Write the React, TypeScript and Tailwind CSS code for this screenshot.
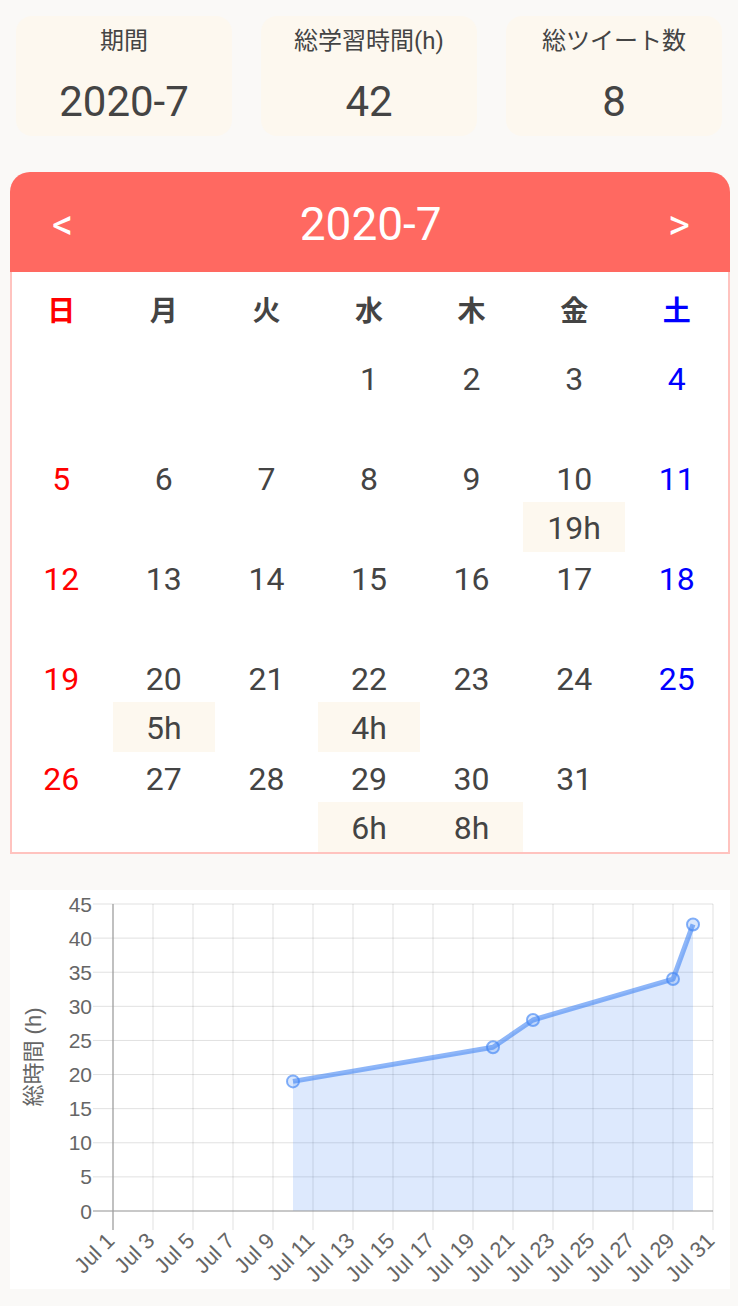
import React from "react";

const font = { fontFamily: "Roboto, 'Noto Sans CJK JP', sans-serif" };

const stats = [
  { label: "期間", value: "2020-7" },
  { label: "総学習時間(h)", value: "42" },
  { label: "総ツイート数", value: "8" },
];

const weekdays = ["日", "月", "火", "水", "木", "金", "土"];

const hours: Record<number, string> = { 10: "19h", 20: "5h", 22: "4h", 29: "6h", 30: "8h" };

// July 2020 starts on Wednesday
const cells: (number | null)[] = [null, null, null];
for (let d = 1; d <= 31; d++) cells.push(d);
while (cells.length < 35) cells.push(null);

function dayColor(i: number) {
  if (i % 7 === 0) return "text-[#ff0000]";
  if (i % 7 === 6) return "text-[#0000ff]";
  return "text-[#444444]";
}

// chart geometry (local to chart card)
const X0 = 103;
const DX = 20;
const Y0 = 321;
const YTOP = 14;
const PER = (Y0 - YTOP) / 45;
const px = (day: number) => X0 + (day - 1) * DX;
const py = (v: number) => Y0 - v * PER;

const data: [number, number][] = [
  [10, 19],
  [20, 24],
  [22, 28],
  [29, 34],
  [30, 42],
];

const axisFont = "'Liberation Sans', Arial, sans-serif";

function Chart() {
  const line = data.map(([d, v]) => `${px(d)},${py(v)}`).join(" ");
  const area = `${px(10)},${Y0} ${line} ${px(30)},${Y0}`;
  const days = Array.from({ length: 16 }, (_, i) => 1 + i * 2);
  const vals = Array.from({ length: 10 }, (_, i) => i * 5);
  return (
    <svg width="720" height="399" className="block overflow-visible">
      {vals.map((v) => (
        <line key={v} x1={83} x2={703} y1={py(v)} y2={py(v)} stroke="rgba(0,0,0,0.12)" strokeWidth={1} />
      ))}
      {days.map((d) => (
        <line key={d} x1={px(d)} x2={px(d)} y1={YTOP} y2={Y0 + 19} stroke="rgba(0,0,0,0.12)" strokeWidth={1} />
      ))}
      <polygon points={area} fill="rgba(66,133,244,0.18)" />
      <line x1={X0} x2={X0} y1={YTOP} y2={Y0 + 19} stroke="#a0a0a0" strokeWidth={1.2} />
      <line x1={83} x2={703} y1={Y0} y2={Y0} stroke="#a0a0a0" strokeWidth={1.2} />
      <polyline points={line} fill="none" stroke="rgba(66,133,244,0.6)" strokeWidth={5} strokeLinejoin="round" />
      {data.map(([d, v]) => (
        <circle key={d} cx={px(d)} cy={py(v)} r={6} fill="rgba(66,133,244,0.2)" stroke="rgba(66,133,244,0.65)" strokeWidth={2} />
      ))}
      {vals.map((v) => (
        <text key={v} x={82} y={py(v) + 7.5} textAnchor="end" fontSize={21} fill="#666666" fontFamily={axisFont}>
          {v}
        </text>
      ))}
      {days.map((d) => (
        <text
          key={d}
          x={px(d) + 3}
          y={Y0 + 31}
          textAnchor="end"
          fontSize={22}
          fill="#666666"
          fontFamily={axisFont}
          transform={`rotate(-45 ${px(d) + 3} ${Y0 + 31})`}
        >
          {`Jul ${d}`}
        </text>
      ))}
      <text
        x={31}
        y={167}
        textAnchor="middle"
        fontSize={22}
        fill="#666666"
        fontFamily="'Liberation Sans', 'Noto Sans CJK JP', sans-serif"
        transform="rotate(-90 31 167)"
      >
        総時間 (h)
      </text>
    </svg>
  );
}

export default function App() {
  return (
    <div className="min-h-[1306px] bg-[#faf9f7] pt-4 pb-[17px]" style={font}>
      {/* stat cards */}
      <div className="grid grid-cols-3 gap-[29px] px-4">
        {stats.map((s) => (
          <div key={s.label} className="h-[120px] rounded-[16px] bg-[#fdf8ef] flex flex-col items-center">
            <div className="h-[50px] flex items-center text-[24px] text-[#444444]">{s.label}</div>
            <div className="h-[72px] flex items-center pt-[2px] text-[42px] text-[#444444]">{s.value}</div>
          </div>
        ))}
      </div>

      {/* calendar */}
      <div className="mt-9 ml-[10px] w-[720px]">
        <div className="h-[100px] rounded-t-[20px] bg-[#ff6961] flex items-center justify-between pl-[42px] pr-[40px] text-white">
          <span className="text-[42px] pt-1">&lt;</span>
          <span className="text-[46px] pt-1">2020-7</span>
          <span className="text-[42px] pt-1">&gt;</span>
        </div>
        <div className="border-2 border-t-0 border-[#ffc3bf] bg-white">
          <div className="grid grid-cols-7 h-[80px] -ml-[2px]">
            {weekdays.map((w, i) => (
              <div key={w} className={`flex items-center justify-center text-[28px] font-bold ${dayColor(i)}`}>
                {w}
              </div>
            ))}
          </div>
          <div className="grid grid-cols-7 -ml-[2px]">
            {cells.map((d, i) => (
              <div key={i} className="h-[100px] flex flex-col">
                <div className={`h-[50px] flex items-center justify-center pt-1 text-[32px] ${dayColor(i)}`}>{d ?? ""}</div>
                {d && hours[d] ? (
                  <div className="h-[50px] flex items-center justify-center pt-[2px] bg-[#fdf8ef] text-[32px] text-[#444444]">
                    {hours[d]}
                  </div>
                ) : null}
              </div>
            ))}
          </div>
        </div>
      </div>

      {/* chart */}
      <div className="mt-9 ml-[10px] w-[720px] h-[399px] bg-white">
        <Chart />
      </div>
    </div>
  );
}
